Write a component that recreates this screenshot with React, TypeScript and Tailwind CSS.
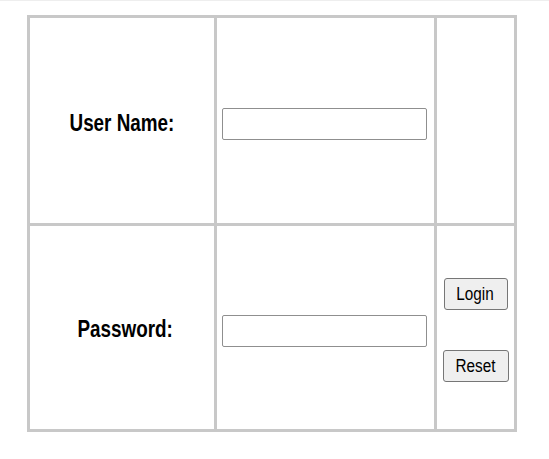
export default function App() {
  const label = "inline-block text-[23px] font-bold text-black leading-none scale-x-[0.82]"
  const input =
    "w-[205px] h-[32px] border border-[#8f8f8f] rounded-[2px] bg-white outline-none"
  const button =
    "h-[32px] border border-[#767676] rounded-[3px] bg-[#efefef] text-[18px] text-black leading-none"

  return (
    <div
      className="w-[549px] h-[459px] bg-white border-t border-[#eeeeee]"
      style={{ fontFamily: '"Liberation Sans", Arial, sans-serif' }}
    >
      <div className="ml-[27px] mt-[14px] w-[490px] grid grid-cols-[184px_217px_77px] grid-rows-[205px_203px] gap-[3px] p-[3px] bg-[#c8c8c8]">
        <div className="bg-white flex items-center justify-center pt-[5px]">
          <span className={label}>User Name:</span>
        </div>
        <div className="bg-white flex items-center justify-center pt-[6px] pr-[2px]">
          <input type="text" className={input} />
        </div>
        <div className="bg-white" />

        <div className="bg-white flex items-center justify-center pt-[4px] pl-[6px]">
          <span className={label}>Password:</span>
        </div>
        <div className="bg-white flex items-center justify-center pt-[6px] pr-[2px]">
          <input type="password" className={input} />
        </div>
        <div className="bg-white flex flex-col items-center justify-center gap-[40px] pt-[4px]">
          <button className={`${button} w-[64px]`}>
            <span className="inline-block scale-x-[0.85]">Login</span>
          </button>
          <button className={`${button} w-[66px]`}>
            <span className="inline-block scale-x-[0.85]">Reset</span>
          </button>
        </div>
      </div>
    </div>
  )
}
